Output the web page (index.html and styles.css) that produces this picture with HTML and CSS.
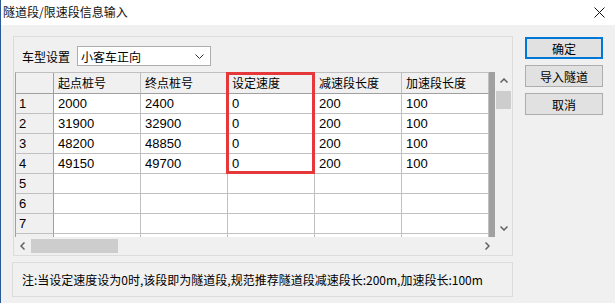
FILE: index.html
```html
<!DOCTYPE html>
<html lang="zh-CN">
<head>
    <meta charset="UTF-8">
    <title>隧道段/限速段信息输入</title>
    <link rel="stylesheet" href="styles.css">
</head>
<body>

    <div class="window">
        <div class="titlebar">
            <span class="title">隧道段/限速段信息输入</span>
            <svg class="close" width="11" height="11" viewBox="0 0 11 11">
                <path d="M0.5 0.5 L10.5 10.5 M10.5 0.5 L0.5 10.5" stroke="#111" stroke-width="1" fill="none"/>
            </svg>
        </div>

        <div class="client">
            <div class="main">
                <div class="group">
                    <div class="type-row">
                        <span class="label">车型设置</span>
                        <div class="combo">
                            <span>小客车正向</span>
                            <svg width="9" height="5" viewBox="0 0 9 5">
                                <path d="M0.5 0.5 L4.5 4.5 L8.5 0.5" stroke="#333" stroke-width="1" fill="none"/>
                            </svg>
                        </div>
                    </div>

                    <div class="grid">
                        <div class="grid-top">
                            <div class="cells">
                                <div class="table">
                                    <div class="c head fixed"></div>
                                    <div class="c head">起点桩号</div>
                                    <div class="c head">终点桩号</div>
                                    <div class="c head">设定速度</div>
                                    <div class="c head">减速段长度</div>
                                    <div class="c head">加速段长度</div>

                                    <div class="c fixed">1</div>
                                    <div class="c">2000</div>
                                    <div class="c">2400</div>
                                    <div class="c">0</div>
                                    <div class="c">200</div>
                                    <div class="c">100</div>

                                    <div class="c fixed">2</div>
                                    <div class="c">31900</div>
                                    <div class="c">32900</div>
                                    <div class="c">0</div>
                                    <div class="c">200</div>
                                    <div class="c">100</div>

                                    <div class="c fixed">3</div>
                                    <div class="c">48200</div>
                                    <div class="c">48850</div>
                                    <div class="c">0</div>
                                    <div class="c">200</div>
                                    <div class="c">100</div>

                                    <div class="c fixed">4</div>
                                    <div class="c">49150</div>
                                    <div class="c">49700</div>
                                    <div class="c">0</div>
                                    <div class="c">200</div>
                                    <div class="c">100</div>

                                    <div class="c fixed">5</div>
                                    <div class="c"></div><div class="c"></div><div class="c"></div><div class="c"></div><div class="c"></div>

                                    <div class="c fixed">6</div>
                                    <div class="c"></div><div class="c"></div><div class="c"></div><div class="c"></div><div class="c"></div>

                                    <div class="c fixed">7</div>
                                    <div class="c"></div><div class="c"></div><div class="c"></div><div class="c"></div><div class="c"></div>

                                    <div class="c fixed last"></div>
                                    <div class="c last"></div><div class="c last"></div><div class="c last"></div><div class="c last"></div><div class="c last"></div>
                                </div>
                                <div class="band"></div>
                            </div>

                            <div class="vscroll">
                                <div class="arrow">
                                    <svg width="8" height="5" viewBox="0 0 8 5">
                                        <path d="M0.5 4.5 L4 1 L7.5 4.5" stroke="#606060" stroke-width="1.5" fill="none"/>
                                    </svg>
                                </div>
                                <div class="vthumb"></div>
                                <div class="spacer"></div>
                                <div class="arrow">
                                    <svg width="8" height="5" viewBox="0 0 8 5">
                                        <path d="M0.5 0.5 L4 4 L7.5 0.5" stroke="#606060" stroke-width="1.5" fill="none"/>
                                    </svg>
                                </div>
                            </div>
                        </div>

                        <div class="grid-bottom">
                            <div class="hscroll">
                                <div class="arrow">
                                    <svg width="5" height="8" viewBox="0 0 5 8">
                                        <path d="M4.5 0.5 L1 4 L4.5 7.5" stroke="#606060" stroke-width="1.5" fill="none"/>
                                    </svg>
                                </div>
                                <div class="hthumb"></div>
                                <div class="spacer"></div>
                                <div class="arrow">
                                    <svg width="5" height="8" viewBox="0 0 5 8">
                                        <path d="M0.5 0.5 L4 4 L0.5 7.5" stroke="#606060" stroke-width="1.5" fill="none"/>
                                    </svg>
                                </div>
                            </div>
                            <div class="corner"></div>
                        </div>

                        <div class="highlight"></div>
                    </div>
                </div>

                <div class="note">注:当设定速度设为0时,该段即为隧道段,规范推荐隧道段减速段长:200m,加速段长:100m</div>
            </div>

            <div class="buttons">
                <button class="btn default">确定</button>
                <button class="btn">导入隧道</button>
                <button class="btn">取消</button>
            </div>
        </div>
    </div>

</body>
</html>
```

FILE: styles.css
```css
* {
    box-sizing: border-box;
    margin: 0;
    padding: 0;
}

body {
    width: 615px;
    height: 303px;
    overflow: hidden;
    font-family: "Noto Sans CJK SC", sans-serif;
    font-size: 12px;
    color: #000;
    background: #f0f0f0;
}

.window {
    height: 303px;
    border-left: 1px solid #2a5a96;
    background: #f0f0f0;
}

.titlebar {
    height: 25px;
    background: #fff;
    display: flex;
    align-items: center;
    justify-content: space-between;
    padding: 0 10px 2px 2px;
}

.title {
    font-size: 12px;
    color: #111;
}

.close {
    margin-top: 2px;
}

.client {
    display: flex;
    gap: 12px;
    padding: 11px 0 0 12px;
}

.main {
    width: 500px;
}

/* group box */
.group {
    border: 1px solid #dcdcdc;
    padding: 9px 0 1px 1px;
}

.type-row {
    display: flex;
    align-items: center;
    gap: 7px;
    padding-left: 7px;
    height: 20px;
    margin-bottom: 6px;
}

.label {
    width: 48px;
}

.combo {
    width: 134px;
    height: 20px;
    background: #fff;
    border: 1px solid #adadad;
    display: flex;
    align-items: center;
    justify-content: space-between;
    padding: 0 6px 0 3px;
}

/* grid */
.grid {
    position: relative;
    width: 497px;
}

.grid-top {
    display: flex;
}

.cells {
    display: flex;
    width: 480px;
    height: 165px;
    background: #fff;
}

.table {
    display: grid;
    grid-template-columns: 38px repeat(5, 87px);
    grid-template-rows: 21px repeat(7, 20px) 4px;
    border-left: 1px solid #a0a0a0;
    border-top: 1px solid #c0c0c0;
}

.c {
    border-right: 1px solid #c0c0c0;
    border-bottom: 1px solid #c0c0c0;
    padding-left: 4px;
    font-family: "Liberation Sans", "Noto Sans CJK SC", sans-serif;
    font-size: 13px;
    line-height: 19px;
    overflow: hidden;
    white-space: nowrap;
}

.c.head {
    background: #f0f0f0;
    font-family: "Noto Sans CJK SC", sans-serif;
    font-size: 12px;
    line-height: 19px;
    border-bottom-color: #a0a0a0;
}

.c.fixed {
    background: #f0f0f0;
    border-right-color: #a0a0a0;
    padding-left: 3px;
}

.c.last {
    border-bottom: none;
}

.band {
    width: 7px;
    background: #a0a0a0;
}

.vscroll {
    width: 17px;
    height: 165px;
    background: #f0f0f0;
    display: flex;
    flex-direction: column;
    align-items: center;
}

.vscroll .arrow {
    height: 17px;
    width: 17px;
    display: flex;
    align-items: center;
    justify-content: center;
}

.vthumb {
    width: 15px;
    height: 18px;
    margin-top: 2px;
    background: #cdcdcd;
}

.spacer {
    flex: 1;
}

.grid-bottom {
    display: flex;
    height: 17px;
}

.hscroll {
    width: 480px;
    background: #f0f0f0;
    display: flex;
    align-items: center;
}

.hscroll .arrow {
    width: 15px;
    height: 17px;
    display: flex;
    align-items: center;
    justify-content: center;
}

.hthumb {
    width: 87px;
    height: 14px;
    margin-left: 1px;
    background: #cdcdcd;
}

.corner {
    width: 17px;
    background: #f0f0f0;
}

.highlight {
    position: absolute;
    left: 211px;
    top: 0;
    width: 89px;
    height: 102px;
    border: 3px solid #e5383b;
}

/* note */
.note {
    margin-top: 6px;
    height: 35px;
    border: 1px solid #dcdcdc;
    padding-left: 9px;
    display: flex;
    align-items: center;
    font-size: 12px;
    margin-left: -1px;
    width: 501px;
}

/* buttons */
.buttons {
    display: flex;
    flex-direction: column;
    gap: 6px;
    padding-top: 1px;
}

.btn {
    width: 78px;
    height: 22px;
    background: #e1e1e1;
    border: 1px solid #adadad;
    font-family: "Noto Sans CJK SC", sans-serif;
    font-size: 12px;
    color: #000;
}

.btn.default {
    border: 2px solid #0078d7;
}
```
